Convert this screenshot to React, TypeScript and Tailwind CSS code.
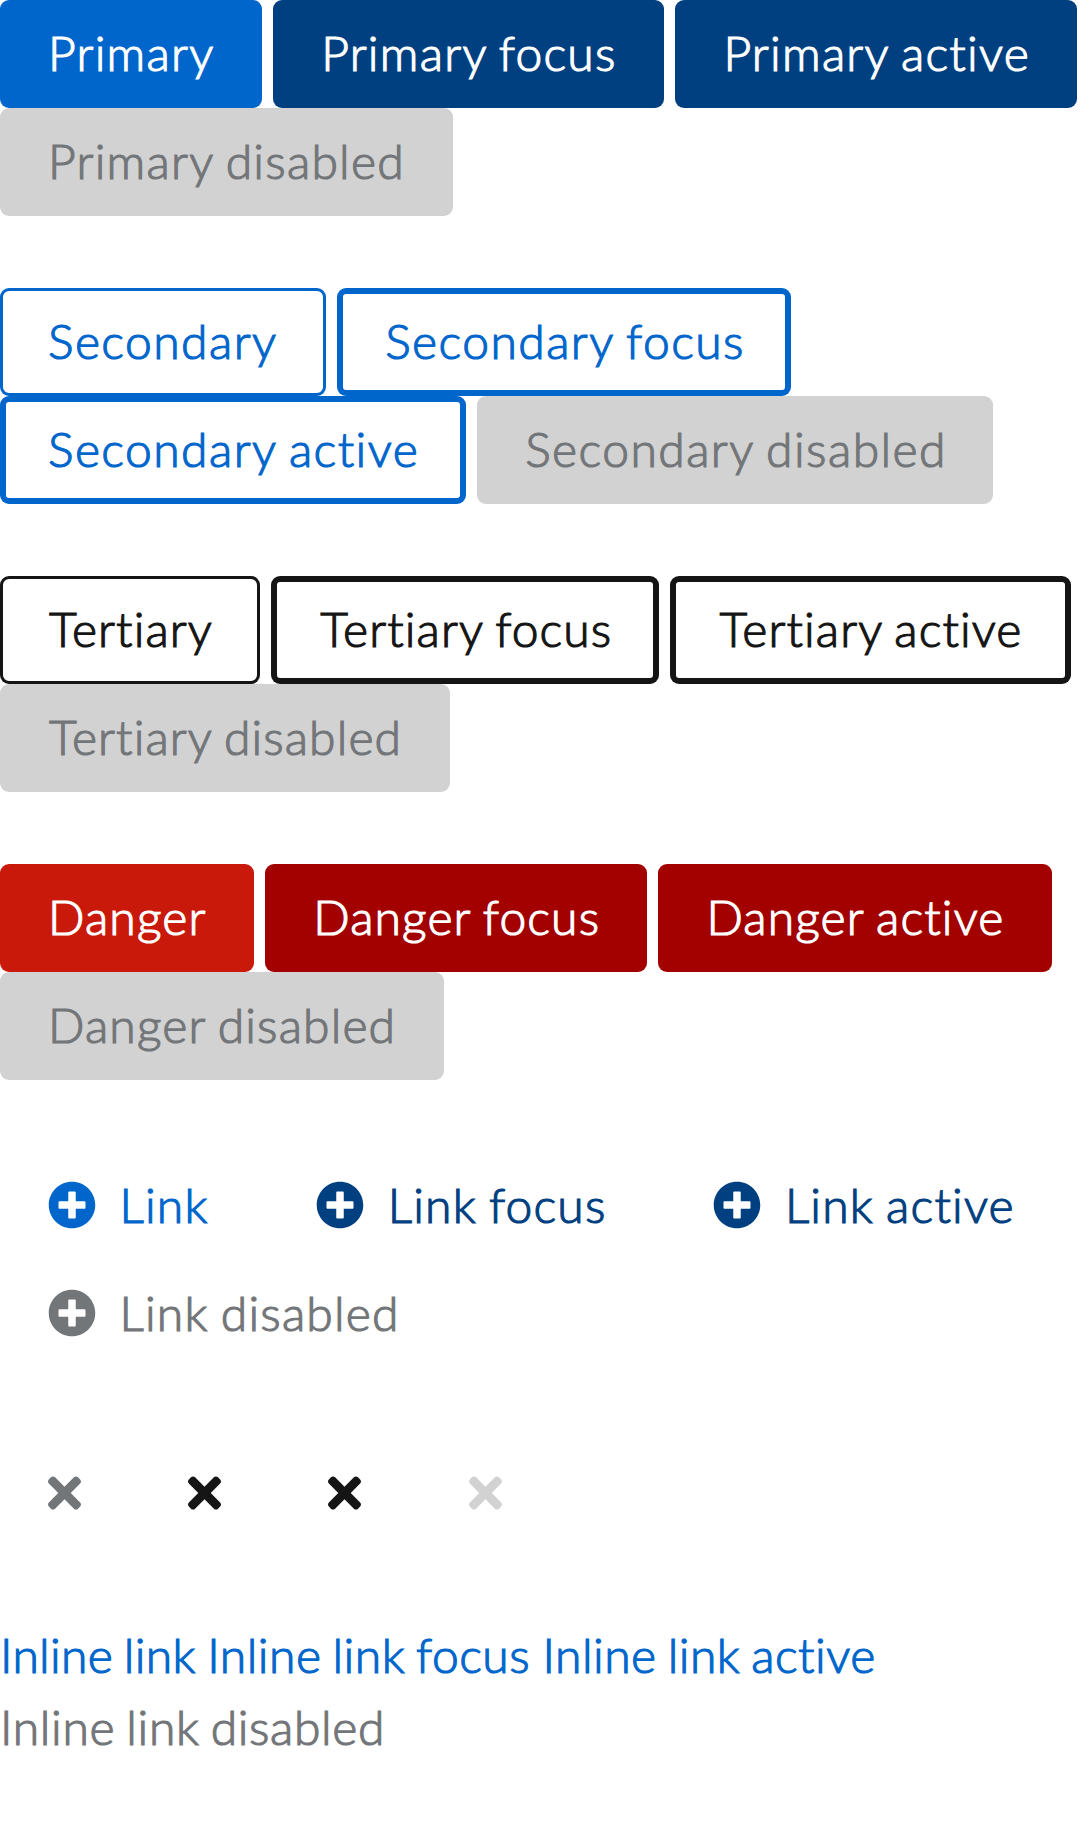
import type { ReactNode } from "react";
import { FaPlusCircle, FaTimes } from "react-icons/fa";

type Item = { label: string; className: string };

const disabled = "bg-[#d2d2d2] text-[#737679]";

const groups: { name: string; tracking: string; items: Item[] }[] = [
  {
    name: "primary",
    tracking: "tracking-[1.25px]",
    items: [
      { label: "Primary", className: "w-[262px] bg-[#0066cc] text-white" },
      { label: "Primary focus", className: "w-[391px] bg-[#004080] text-white" },
      { label: "Primary active", className: "w-[402px] bg-[#004080] text-white" },
      { label: "Primary disabled", className: `w-[453px] ${disabled}` },
    ],
  },
  {
    name: "secondary",
    tracking: "tracking-[1.45px]",
    items: [
      { label: "Secondary", className: "w-[326px] text-[#0066cc] shadow-[inset_0_0_0_3px_#0066cc]" },
      { label: "Secondary focus", className: "w-[454px] text-[#0066cc] shadow-[inset_0_0_0_6px_#0066cc]" },
      { label: "Secondary active", className: "w-[466px] text-[#0066cc] shadow-[inset_0_0_0_6px_#0066cc]" },
      { label: "Secondary disabled", className: `w-[516px] ${disabled}` },
    ],
  },
  {
    name: "tertiary",
    tracking: "tracking-[1.1px] indent-[1px]",
    items: [
      { label: "Tertiary", className: "w-[260px] text-[#151515] shadow-[inset_0_0_0_3px_#151515]" },
      { label: "Tertiary focus", className: "w-[388px] text-[#151515] shadow-[inset_0_0_0_6px_#151515]" },
      { label: "Tertiary active", className: "w-[401px] text-[#151515] shadow-[inset_0_0_0_6px_#151515]" },
      { label: "Tertiary disabled", className: `w-[450px] ${disabled}` },
    ],
  },
  {
    name: "danger",
    tracking: "tracking-[1.15px]",
    items: [
      { label: "Danger", className: "w-[254px] bg-[#c9190b] text-white" },
      { label: "Danger focus", className: "w-[382px] bg-[#a30000] text-white" },
      { label: "Danger active", className: "w-[394px] bg-[#a30000] text-white" },
      { label: "Danger disabled", className: `w-[444px] ${disabled}` },
    ],
  },
];

const links: Item[] = [
  { label: "Link", className: "w-[257px] text-[#0066cc]" },
  { label: "Link focus", className: "w-[386px] text-[#004080]" },
  { label: "Link active", className: "w-[397px] text-[#004080]" },
  { label: "Link disabled", className: "w-[448px] text-[#737679]" },
];

const closeColors = ["text-[#737679]", "text-[#151515]", "text-[#151515]", "text-[#d2d2d2]"];

const inlineLinks: Item[] = [
  { label: "Inline link", className: "w-[196px] tracking-[0.3px] text-[#0066cc]" },
  { label: "Inline link focus", className: "w-[324px] tracking-[0.5px] text-[#0066cc]" },
  { label: "Inline link active", className: "w-[334px] tracking-[0.5px] text-[#0066cc]" },
  { label: "Inline link disabled", className: "w-[387px] tracking-[0.65px] text-[#737679]" },
];

function Row({ children }: { children: ReactNode }) {
  return <div className="flex flex-wrap gap-x-[11.2px]">{children}</div>;
}

export default function App() {
  return (
    <main className="flex min-h-[1836px] w-[1080px] flex-col gap-[72px] bg-white font-['Lato',sans-serif] text-[48px] leading-[72px] font-light [font-variant-ligatures:none] [-webkit-text-stroke:1.2px_currentColor]">
      {groups.map((group) => (
        <Row key={group.name}>
          {group.items.map((item) => (
            <button
              key={item.label}
              className={`flex h-[108px] items-center rounded-[9px] pb-[3px] pl-12 whitespace-nowrap [word-spacing:-2px] ${group.tracking} ${item.className}`}
            >
              {item.label}
            </button>
          ))}
        </Row>
      ))}

      <Row>
        {links.map((item) => (
          <button
            key={item.label}
            className={`flex h-[108px] items-center gap-[23.5px] pb-[3px] pl-12 tracking-[1.2px] whitespace-nowrap [word-spacing:-2px] ${item.className}`}
          >
            <FaPlusCircle className="size-12 shrink-0" strokeWidth={0} />
            {item.label}
          </button>
        ))}
      </Row>

      <Row>
        {closeColors.map((color, i) => (
          <button key={i} aria-label="Close" className={`flex h-[108px] items-center px-12 pb-[2px] ${color}`}>
            <FaTimes className="h-12 w-[33px]" strokeWidth={0} />
          </button>
        ))}
      </Row>

      <Row>
        {inlineLinks.map((item) => (
          <button
            key={item.label}
            className={`flex h-[72px] items-center pb-[3px] whitespace-nowrap [word-spacing:-2.5px] ${item.className}`}
          >
            {item.label}
          </button>
        ))}
      </Row>
    </main>
  );
}
